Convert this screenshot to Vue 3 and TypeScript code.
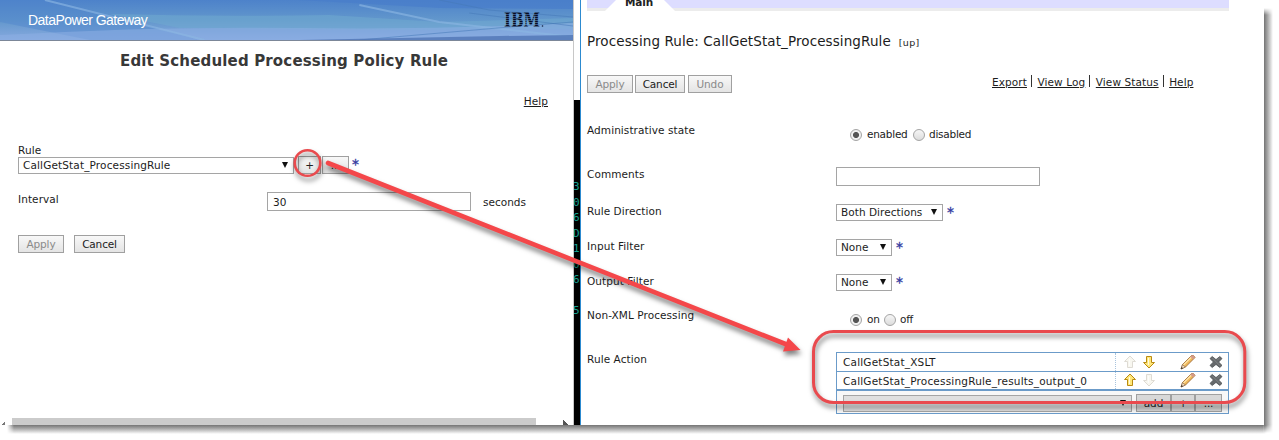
<script setup lang="ts">
interface ActionRow { name: string; up: boolean; down: boolean }

const actions: ActionRow[] = [
  { name: 'CallGetStat_XSLT', up: false, down: true },
  { name: 'CallGetStat_ProcessingRule_results_output_0', up: true, down: false },
]
const links: string[] = ['Export', 'View Log', 'View Status', 'Help']
const terminal: string[] = ['3-', '0', '60', 'Dm', '1.', '0.', '60', '', '5-']
</script>

<template>
  <div class="stage">
    <div class="sheet">
      <section class="left">
        <header class="banner">
          <svg class="waves" width="573" height="40" viewBox="0 0 574 40" preserveAspectRatio="none">
            <defs>
              <linearGradient id="sky" x1="0" y1="0" x2="0" y2="1">
                <stop offset="0" stop-color="#4d82ca" />
                <stop offset=".5" stop-color="#6297cc" />
                <stop offset="1" stop-color="#86a9df" />
              </linearGradient>
            </defs>
            <rect width="574" height="40" fill="url(#sky)" />
            <path d="M0 0H50L110 15L200 40H90L0 22Z" fill="#4f86cc" opacity=".45" />
            <path d="M110 14Q220 17 330 15L440 22L574 18V29L400 30L180 28Z" fill="#70a9cf" opacity=".55" />
            <path d="M300 0H574V9L440 8Z" fill="#487dca" opacity=".7" />
            <path d="M0 35Q160 26 300 28T574 23V40H0Z" fill="#8caee3" opacity=".55" />
            <path d="M45 0L205 40M360 5L440 22L574 37" fill="none" stroke="#8bb5e2" stroke-width="2" opacity=".65" />
            <path d="M440 0L490 10L574 17M360 40L510 27L574 22M470 13L574 26" fill="none" stroke="#4679b8" stroke-width="1" opacity=".55" />
            <path d="M300 40L500 36L574 35V40Z" fill="#5076b5" opacity=".8" />
          </svg>
          <span class="product">DataPower Gateway</span>
          <svg class="ibm" width="42" height="26" viewBox="0 0 42 26">
            <defs>
              <pattern id="stripes" width="42" height="2" patternUnits="userSpaceOnUse">
                <rect width="42" height="1.45" fill="#080c20" />
              </pattern>
            </defs>
            <text x="0" y="20" textLength="36" lengthAdjust="spacingAndGlyphs" fill="url(#stripes)" class="ibm-text">IBM</text>
            <circle cx="38.5" cy="19" r=".8" fill="#102040" />
          </svg>
        </header>
        <h1>Edit Scheduled Processing Policy Rule</h1>
        <div class="help-row"><a>Help</a></div>
        <div class="rule-label">Rule</div>
        <div class="rule-row">
          <div class="select rule-select"><span>CallGetStat_ProcessingRule</span><i class="tri"></i></div>
          <div class="btn plus">+</div>
          <div class="btn dots">...</div>
          <b class="star">*</b>
        </div>
        <div class="interval-row">
          <span class="interval-label">Interval</span>
          <div class="input">30</div>
          <span class="unit">seconds</span>
        </div>
        <div class="left-buttons">
          <div class="btn off apply">Apply</div>
          <div class="btn cancel">Cancel</div>
        </div>
        <div class="scroll"><i class="arrow-l"></i><div class="thumb"></div><i class="arrow-r"></i></div>
      </section>

      <div class="gap">
        <div class="terminal"><div v-for="(t, i) in terminal" :key="i" class="tline">{{ t }}</div></div>
      </div>

      <section class="right">
        <div class="tabs"><div class="tab"><span>Main</span></div></div>
        <div class="title"><span class="title-text">Processing Rule: CallGetStat_ProcessingRule</span><span class="up">[up]</span></div>
        <div class="toolbar">
          <div class="btn off t-apply">Apply</div>
          <div class="btn t-cancel">Cancel</div>
          <div class="btn off t-undo">Undo</div>
          <nav class="links">
            <template v-for="(l, i) in links" :key="l"><i v-if="i" class="bar"></i><a>{{ l }}</a></template>
          </nav>
        </div>
        <div class="row r1"><label>Administrative state</label>
          <div class="radios"><i class="radio on"></i><span class="w-enabled">enabled</span><i class="radio"></i><span>disabled</span></div></div>
        <div class="row r2"><label>Comments</label><div class="input"></div></div>
        <div class="row r3"><label>Rule Direction</label><div class="select direction"><span>Both Directions</span><i class="tri"></i></div><b class="star">*</b></div>
        <div class="row r3"><label>Input Filter</label><div class="select none"><span>None</span><i class="tri"></i></div><b class="star">*</b></div>
        <div class="row r5"><label>Output Filter</label><div class="select none"><span>None</span><i class="tri"></i></div><b class="star">*</b></div>
        <div class="row r6"><label>Non-XML Processing</label>
          <div class="radios"><i class="radio on"></i><span class="w-on">on</span><i class="radio"></i><span>off</span></div></div>
        <div class="row r7"><label>Rule Action</label>
          <div class="table">
            <div v-for="a in actions" :key="a.name" class="trow">
              <span class="tname">{{ a.name }}</span>
              <div class="icons">
                <svg class="ic-up" :class="{ faded: !a.up }" width="14" height="14" viewBox="0 0 14 14"><path d="M7 1L12.5 6.5H9.5V12.5H4.5V6.5H1.5Z" fill="#ffe77a" stroke="#b98a12" stroke-linejoin="round" /><path d="M6.5 4V11" stroke="#fffbe0" /></svg>
                <svg class="ic-down" :class="{ faded: !a.down }" width="14" height="14" viewBox="0 0 14 14"><path d="M7 13L12.5 7.5H9.5V1.5H4.5V7.5H1.5Z" fill="#ffe77a" stroke="#b98a12" stroke-linejoin="round" /><path d="M6.5 3V10" stroke="#fffbe0" /></svg>
                <svg class="ic-pen" width="16" height="16" viewBox="0 0 16 16"><path d="M1 15L2.5 10.5L11.5 1.5Q13.5 .5 15 3.5L5.5 13Z" fill="#efb85c" stroke="#96602b" stroke-width=".8" /><path d="M3.5 11L11.8 2.8" stroke="#ffe6a8" stroke-width="1.3" /><path d="M11.5 1.6Q13.5 .5 14.8 3.6L13.2 5.2L10.3 2.8Z" fill="#d49a8c" /><path d="M2.5 10.7L5.3 13L1 15Z" fill="#f5dcc0" stroke="#6f5845" stroke-width=".5" /><path d="M1 15L1.6 13.1L3 14.2Z" fill="#222" /></svg>
                <svg class="ic-x" width="14" height="14" viewBox="0 0 14 14"><path d="M3.2 1.5L7 4.6L10.8 1.5L13 3.6L9.6 7L13 10.4L10.8 12.5L7 9.4L3.2 12.5L1 10.4L4.4 7L1 3.6Z" fill="#66696b" stroke="#4e5254" stroke-width=".8" stroke-linejoin="round" /><path d="M3.2 2.8L11 10.8M10.8 2.8L8.3 5" stroke="#909393" stroke-width=".6" /></svg>
              </div>
            </div>
            <div class="tfoot">
              <div class="select foot-select"><span></span><i class="tri"></i></div>
              <div class="btn f-add">add</div><div class="btn f-plus">+</div><div class="btn f-dots">...</div>
            </div>
          </div>
        </div>
      </section>
    </div>
    <div class="edge-right"></div>
    <div class="edge-bottom"></div>
    <svg class="marks" width="1279" height="440" viewBox="0 0 1279 440">
      <g fill="none" stroke="#e94a4e">
        <circle cx="307.5" cy="163" r="12.8" stroke-width="2.6" />
        <rect x="813.5" y="331.5" width="431.3" height="71" rx="20" stroke-width="3" />
      </g>
      <path d="M328 163L788 345" stroke="#f4474a" stroke-width="4.6" stroke-linecap="round" />
      <path d="M788 337.5L800.5 350L783 351.5Z" fill="#f4474a" />
    </svg>
  </div>
</template>

<style>
body { margin: 0; background: #fff; }
</style>

<style scoped>
.stage { position: relative; width: 1279px; height: 440px; overflow: hidden; background: #fff; font: 10.5px/14px "DejaVu Sans", sans-serif; letter-spacing: .08px; color: #1c1c1c; }
.stage * { box-sizing: border-box; }
.sheet { display: flex; width: 1267px; height: 425px; overflow: hidden; }
.left { width: 573px; height: 425px; display: flex; flex-direction: column; flex: none; }
.banner { height: 41px; border-bottom: 1px solid #7c8798; display: grid; grid-template-columns: 504px 69px; flex: none; }
.banner > * { grid-row: 1; }
.waves { grid-column: 1 / 3; }
.product { grid-column: 1; margin: 12px 0 0 28px; font: 14px/17px "Liberation Sans", sans-serif; letter-spacing: -.54px; color: #fff; }
.ibm { grid-column: 2; margin-top: 7px; }
.ibm-text { font: bold 20px "DejaVu Serif", serif; letter-spacing: 0; }
h1 { margin: 9px 0 0; padding-left: 120px; height: 22px; font-size: 15px; line-height: 23px; letter-spacing: .16px; white-space: nowrap; color: #383838; }
a { text-decoration: underline; text-underline-offset: 1px; white-space: nowrap; }
.help-row { margin: 22px 25px 0 0; text-align: right; height: 14px; }
.rule-label { margin: 35px 0 0 18px; height: 14px; }
.rule-row { display: flex; margin: -1px 0 0 18px; height: 19px; }
.select { height: 17px; border: 1px solid #a5a5a5; background: #fff; display: flex; justify-content: space-between; padding-left: 4px; line-height: 15px; white-space: nowrap; }
.tri { width: 0; height: 0; border: 3.5px solid transparent; border-top: 6px solid #111; border-bottom: 0; margin: 4px 5px 0 0; }
.rule-select { width: 276px; margin-top: 1px; letter-spacing: .14px; }
.btn { height: 18px; border: 1px solid #a0a0a0; background: linear-gradient(#f8f8f8, #e4e4e4); text-align: center; line-height: 17px; font-size: 10.5px; letter-spacing: -.15px; color: #222; flex: none; }
.off { color: #8a8a8a; }
.plus { width: 23px; margin-left: 4px; }
.dots { width: 27px; margin-left: 1px; }
.star { color: #3339a0; font-size: 14px; font-weight: normal; -webkit-text-stroke: .3px #3339a0; line-height: 17px; margin-left: 3px; }
.interval-row { display: flex; height: 19px; margin: 17px 0 0 18px; }
.interval-label { width: 249px; }
.input { width: 204px; height: 19px; border: 1px solid #a5a5a5; padding-left: 5px; line-height: 19px; background: #fff; }
.unit { margin: 3px 0 0 12px; letter-spacing: 0; }
.left-buttons { display: flex; margin: 24px 0 0 18px; gap: 10px; }
.apply { width: 46px; }
.cancel { width: 51px; }
.scroll { margin-top: auto; height: 7px; display: flex; }
.thumb { width: 524px; height: 7px; background: #cbcbcb; }
.arrow-l { width: 12px; height: 7px; background: linear-gradient(135deg, transparent 50%, #777 51%) 1px 3px / 4px 4px no-repeat; }
.arrow-r { width: 5px; height: 5px; margin: 2px 0 0 27px; background: linear-gradient(45deg, #555 50%, transparent 51%); }
.gap { width: 8px; height: 425px; flex: none; display: flex; flex-direction: column; justify-content: flex-end; border-right: 1px solid #2c8ad0; border-left: 1px solid #c8c8c8; }
.terminal { height: 325px; background: #000; padding-top: 79px; overflow: hidden; font: 11px/15.5px "DejaVu Sans Mono", monospace; letter-spacing: 0; color: #16a090; }
.tline { height: 15.5px; margin-left: -1px; }
.right { flex: 1; padding-left: 6px; display: flex; flex-direction: column; }
.tabs { width: 642px; height: 11px; flex: none; background: linear-gradient(#ddf 8px, #ececec 8px); }
.tab { width: 70px; height: 11px; margin-left: 18px; background: #fff; clip-path: polygon(11px 0, 59px 0, 70px 11px, 0 11px); overflow: hidden; }
.tab span { display: block; margin-top: -5px; padding-left: 20px; font-weight: bold; letter-spacing: -.1px; color: #222; }
.title { display: flex; align-items: baseline; height: 20px; margin-top: 20px; line-height: 20px; }
.title-text { font-size: 13.5px; letter-spacing: .1px; white-space: nowrap; }
.up { margin-left: 8px; font-size: 9.5px; letter-spacing: .3px; }
.toolbar { display: flex; height: 19px; margin-top: 24px; }
.t-apply { width: 46px; }
.t-cancel { width: 50px; margin-left: 2px; }
.t-undo { width: 44px; margin-left: 3px; }
.links { display: flex; margin-left: 260px; height: 14px; }
.links a { letter-spacing: .1px; }
.bar { width: 1px; height: 12px; margin: 0 5.5px 0 4px; background: #333; }
.row { display: flex; }
.row label { width: 249px; flex: none; }
.r1 { height: 44px; margin-top: 29px; }
.r2 { height: 37px; }
.r3 { height: 35px; }
.r5 { height: 34px; }
.r6 { height: 44px; }
.r7 { height: 73px; }
.direction { width: 107px; letter-spacing: .05px; }
.none { width: 56px; letter-spacing: 0; }
.row .star { line-height: 17px; margin-left: 4px; }
.radios { display: flex; margin: 4px 0 0 14px; align-items: flex-start; letter-spacing: -.25px; }
.radio { width: 12px; height: 12px; border: 1px solid #a4a4a4; border-radius: 50%; background: linear-gradient(#f6f6f6, #dcdcdc); margin: 2px 5px 0 0; }
.radio.on { background: radial-gradient(circle, #555 0 2.7px, #f0f0f0 3.3px); }
.w-enabled { width: 46px; }
.w-on { width: 17px; }
.radios .radio:nth-child(3) { margin-right: 4px; }
.table { width: 393px; height: 62px; border: 1px solid #6b9bc9; }
.trow { display: flex; height: 18.5px; border-bottom: 1px solid #6b9bc9; }
.tname { width: 279px; padding-left: 6px; line-height: 18px; letter-spacing: .19px; border-right: 1px dotted #a9c4dd; }
.icons { display: flex; align-items: center; }
.ic-up { margin-left: 7px; }
.ic-down { margin-left: 5px; }
.ic-pen { margin-left: 24px; }
.ic-x { margin-left: 13px; }
.faded { opacity: .3; filter: grayscale(.8); }
.tfoot { display: flex; height: 23px; padding: 3px 0 0 6px; background: #f8f8f8; border-top: 1px solid #6b9bc9; }
.foot-select { width: 289px; margin-top: 1px; background: #e0e0e0; }
.tfoot .btn { background: #d8d8d8; }
.f-add { width: 35px; margin-left: 4px; }
.f-plus { width: 24px; }
.f-dots { width: 27px; }
.edge-right { position: absolute; left: 1264px; top: 8px; width: 9px; height: 425px; background: linear-gradient(90deg, #747474, #a8a8a8 40%, #fff); -webkit-mask: linear-gradient(transparent, #000 7px calc(100% - 8px), transparent); mask: linear-gradient(transparent, #000 7px calc(100% - 8px), transparent); }
.edge-bottom { position: absolute; left: 7px; top: 425px; width: 1260px; height: 9px; background: linear-gradient(#747474, #a8a8a8 40%, #fff); -webkit-mask: linear-gradient(90deg, transparent, #000 7px calc(100% - 4px), transparent); mask: linear-gradient(90deg, transparent, #000 7px calc(100% - 4px), transparent); }
.marks { position: absolute; left: 0; top: 0; filter: drop-shadow(1px 4px 2.5px rgba(0, 0, 0, .5)); }
</style>
